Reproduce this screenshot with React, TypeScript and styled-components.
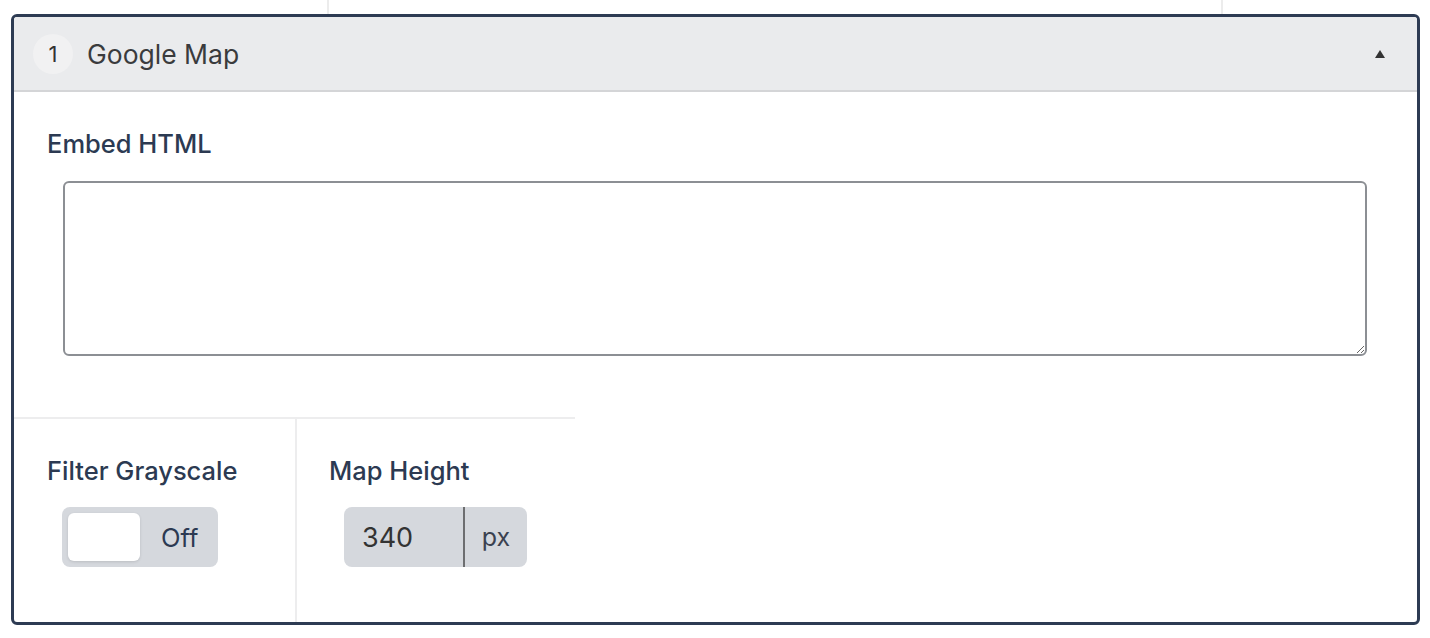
import React, { useState } from "react"
import styled, { createGlobalStyle } from "styled-components"

const GlobalStyle = createGlobalStyle`
  html, body {
    margin: 0;
    padding: 0;
    background: #ffffff;
    font-family: Inter, "Noto Sans", "Liberation Sans", sans-serif;
  }
  * {
    box-sizing: border-box;
  }
`

const Page = styled.div`
  padding: 0 10px 0 11px;
`

const TopStrip = styled.div`
  display: grid;
  grid-template-columns: 316px 894px 1fr;
  height: 14px;
`

const StripCell = styled.div<{ $divided?: boolean }>`
  border-left: ${ p => p.$divided ? "2px solid #ececec" : "none" };
`

const Panel = styled.section`
  width: 1409px;
  height: 611px;
  border: 3px solid #2d3b53;
  border-radius: 6px;
  overflow: hidden;
  display: flex;
  flex-direction: column;
`

const Header = styled.header`
  display: flex;
  align-items: center;
  height: 75px;
  padding: 0 32px 0 19px;
  background: #eaebed;
  border-bottom: 2px solid #d4d5d7;
`

const OrderBadge = styled.span`
  display: flex;
  align-items: center;
  justify-content: center;
  width: 40px;
  height: 40px;
  border-radius: 50%;
  background: #f1f1f2;
  color: #333333;
  font-size: 22px;
`

const Title = styled.h2`
  flex: 1;
  margin: 0 0 0 14px;
  font-size: 26.5px;
  font-weight: 400;
  color: #3a3b3d;
`

const Caret = styled.button`
  width: 10px;
  height: 8px;
  padding: 0;
  border: none;
  background: none;
  border-left: 5px solid transparent;
  border-right: 5px solid transparent;
  border-bottom: 8px solid #333333;
  cursor: pointer;
`

const Body = styled.div`
  flex: 1;
  display: flex;
  flex-direction: column;
`

const WideField = styled.div`
  padding: 36px 50px 61px 33px;
`

const Label = styled.label`
  display: block;
  font-size: 25.5px;
  line-height: 32px;
  font-weight: 500;
  color: #2c3a52;
`

const Textarea = styled.textarea`
  display: block;
  width: calc(100% - 16px);
  height: 175px;
  margin: 21px 0 0 16px;
  border: 2px solid #8c8f94;
  border-radius: 6px;
  font: inherit;
  font-size: 20px;
  padding: 8px 12px;
  resize: vertical;
`

const Row = styled.div`
  flex: 1;
  display: grid;
  grid-template-columns: 281px 280px;
`

const Cell = styled.div<{ $divided?: boolean }>`
  border-top: 2px solid #ededee;
  border-left: ${ p => p.$divided ? "2px solid #ededee" : "none" };
  padding: 36px 20px 0 ${ p => p.$divided ? "32px" : "33px" };
`

const Control = styled.div`
  margin: 20px 0 0 15px;
`

const Toggle = styled.button`
  display: flex;
  align-items: center;
  width: 156px;
  height: 60px;
  padding: 6px;
  border: none;
  border-radius: 8px;
  background: #d5d8dd;
  cursor: pointer;
  font-family: inherit;
`

const Knob = styled.span`
  width: 72px;
  height: 48px;
  border-radius: 6px;
  background: #ffffff;
  box-shadow: 0 1px 3px rgba(0, 0, 0, 0.12);
`

const ToggleText = styled.span`
  margin-left: 21px;
  font-size: 25.5px;
  color: #2c3a52;
`

const InputGroup = styled.div`
  display: flex;
  width: 183px;
  height: 60px;
  border-radius: 8px;
  background: #d5d8dd;
  overflow: hidden;
`

const NumberInput = styled.input`
  width: 121px;
  height: 100%;
  padding: 0 0 0 18px;
  border: none;
  border-right: 2px solid #6d6e70;
  background: transparent;
  font-family: inherit;
  font-size: 27px;
  color: #333333;
  outline: none;
`

const Suffix = styled.span`
  flex: 1;
  display: flex;
  align-items: center;
  justify-content: center;
  font-size: 25px;
  color: #3b4250;
`

export default function App() {
  const [grayscale, setGrayscale] = useState(false)
  const [height, setHeight] = useState("340")

  return (
    <Page>
      <GlobalStyle />
      <TopStrip>
        <StripCell />
        <StripCell $divided />
        <StripCell $divided />
      </TopStrip>
      <Panel>
        <Header>
          <OrderBadge>1</OrderBadge>
          <Title>Google Map</Title>
          <Caret title="Collapse" />
        </Header>
        <Body>
          <WideField>
            <Label htmlFor="embed">Embed HTML</Label>
            <Textarea id="embed" />
          </WideField>
          <Row>
            <Cell>
              <Label>Filter Grayscale</Label>
              <Control>
                <Toggle onClick={ () => setGrayscale(!grayscale) }>
                  <Knob />
                  <ToggleText>{ grayscale ? "On" : "Off" }</ToggleText>
                </Toggle>
              </Control>
            </Cell>
            <Cell $divided>
              <Label htmlFor="map-height">Map Height</Label>
              <Control>
                <InputGroup>
                  <NumberInput
                    id="map-height"
                    value={ height }
                    onChange={ e => setHeight(e.target.value) }
                  />
                  <Suffix>px</Suffix>
                </InputGroup>
              </Control>
            </Cell>
          </Row>
        </Body>
      </Panel>
    </Page>
  )
}
